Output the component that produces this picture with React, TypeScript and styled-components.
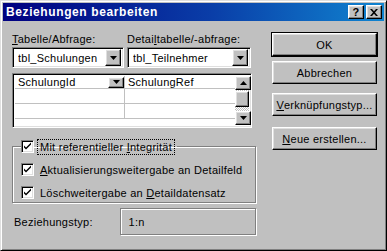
import React from "react";
import styled, { createGlobalStyle, css } from "styled-components";

const GlobalStyle = createGlobalStyle`
    html, body {
        margin: 0;
        padding: 0;
        background: #c0c0c0;
    }
    * {
        box-sizing: border-box;
    }
`;

const raised = css`
    border: 1px solid;
    border-color: #ffffff #000000 #000000 #ffffff;
    box-shadow: inset -1px -1px 0 #808080, inset 1px 1px 0 #dfdfdf;
    background: #c0c0c0;
`;

const sunken = css`
    border: 1px solid;
    border-color: #808080 #ffffff #ffffff #808080;
    box-shadow: inset 1px 1px 0 #000000, inset -1px -1px 0 #dfdfdf;
`;

const Window = styled.div`
    width: 387px;
    height: 251px;
    display: flex;
    flex-direction: column;
    padding: 2px;
    background: #c0c0c0;
    border: 1px solid;
    border-color: #dfdfdf #000000 #000000 #dfdfdf;
    box-shadow: inset 1px 1px 0 #ffffff, inset -1px -1px 0 #808080;
    font-family: "Liberation Sans", Arial, sans-serif;
    font-size: 11px;
    letter-spacing: 0.25px;
    color: #000000;
`;

const TitleBar = styled.div`
    height: 18px;
    display: flex;
    align-items: center;
    padding: 0 2px 0 3px;
    background: linear-gradient(90deg, #000080 0%, #0a3ea8 55%, #1084d0 100%);
    color: #ffffff;
`;

const TitleText = styled.div`
    flex: 1;
    font-weight: bold;
    font-size: 12px;
    letter-spacing: 0.6px;
`;

const TitleButton = styled.div<{ $gap?: number }>`
    ${raised};
    width: 16px;
    height: 14px;
    margin-left: ${(p) => p.$gap ?? 0}px;
    display: flex;
    align-items: center;
    justify-content: center;
    color: #000000;
    font-weight: bold;
    font-size: 11px;
    line-height: 1;
`;

const Content = styled.div`
    flex: 1;
    display: flex;
    padding: 12px 0 0 9px;
    gap: 16px;
`;

const LeftColumn = styled.div`
    width: 244px;
    display: flex;
    flex-direction: column;
`;

const TopGrid = styled.div`
    display: grid;
    grid-template-columns: 112px 124px;
    column-gap: 3px;
    row-gap: 1px;
`;

const Label = styled.div`
    height: 13px;
    line-height: 13px;
    white-space: nowrap;
`;

const Combo = styled.div`
    ${sunken};
    height: 21px;
    background: #ffffff;
    display: flex;
    align-items: center;
    padding: 2px 2px 2px 5px;
`;

const ComboText = styled.div`
    flex: 1;
    white-space: nowrap;
    overflow: hidden;
`;

const ArrowButton = styled.div<{ $h?: number }>`
    ${raised};
    width: 16px;
    height: ${(p) => p.$h ?? 17}px;
    display: flex;
    align-items: center;
    justify-content: center;
    flex-shrink: 0;
`;

const FieldTable = styled.div`
    ${sunken};
    margin-top: 5px;
    width: 240px;
    height: 55px;
    background: #ffffff;
    display: flex;
    padding: 2px;
`;

const Rows = styled.div`
    flex: 1;
    display: flex;
    flex-direction: column;
`;

const Row = styled.div<{ $h: number }>`
    height: ${(p) => p.$h}px;
    flex-shrink: 0;
    display: grid;
    grid-template-columns: 110px 1fr;
    border-bottom: 1px solid #c0c0c0;
`;

const Cell = styled.div<{ $first?: boolean }>`
    display: flex;
    align-items: center;
    padding-left: 3px;
    white-space: nowrap;
    border-right: ${(p) => (p.$first ? "1px solid #c0c0c0" : "none")};
`;

const CellText = styled.div`
    flex: 1;
`;

const ScrollBar = styled.div`
    width: 14px;
    display: flex;
    flex-direction: column;
    background-color: #e0e0e0;
    background-image: repeating-conic-gradient(#c0c0c0 0 25%, #ffffff 0 50%);
    background-size: 2px 2px;
`;

const ScrollThumb = styled.div`
    ${raised};
    height: 16px;
    margin-top: 1px;
`;

const Spacer = styled.div`
    flex: 1;
`;

const Group = styled.fieldset`
    margin: 10px 0 0 0;
    padding: 0 0 0 8px;
    min-width: 0;
    width: 244px;
    height: 65px;
    border: 1px solid #808080;
    box-shadow: 1px 1px 0 #ffffff, inset 1px 1px 0 #ffffff;
    display: flex;
    flex-direction: column;
`;

const Legend = styled.legend`
    padding: 0 2px 0 0;
    margin-left: 0;
    display: flex;
    align-items: center;
    height: 17px;
`;

const CheckRow = styled.div<{ $top?: number }>`
    display: flex;
    align-items: center;
    height: 13px;
    margin-top: ${(p) => p.$top ?? 0}px;
`;

const CheckBox = styled.div`
    ${sunken};
    width: 13px;
    height: 13px;
    background: #ffffff;
    display: flex;
    align-items: center;
    justify-content: center;
    flex-shrink: 0;
`;

const CheckLabel = styled.div<{ $focus?: boolean }>`
    margin-left: 3px;
    padding: 0 2px;
    line-height: 14px;
    white-space: nowrap;
    border: 1px ${(p) => (p.$focus ? "dotted #000000" : "solid transparent")};
`;

const TypeRow = styled.div`
    margin-top: 5px;
    display: flex;
    align-items: center;
    height: 27px;
`;

const TypeLabel = styled.div`
    width: 108px;
    padding-left: 2px;
`;

const TypeBox = styled.div`
    width: 137px;
    height: 27px;
    border: 1px solid #808080;
    box-shadow: 1px 1px 0 #ffffff, inset 1px 1px 0 #ffffff;
    display: flex;
    align-items: center;
    padding-left: 8px;
`;

const RightColumn = styled.div`
    width: 105px;
    display: flex;
    flex-direction: column;
`;

const DialogButton = styled.div<{ $default?: boolean; $top?: number }>`
    ${raised};
    height: 23px;
    margin-top: ${(p) => p.$top ?? 0}px;
    display: flex;
    align-items: center;
    justify-content: center;
    white-space: nowrap;
    ${(p) =>
        p.$default &&
        css`
            box-shadow: inset -1px -1px 0 #808080, inset 1px 1px 0 #dfdfdf, 0 0 0 1px #000000;
        `}
`;

const U = styled.span`
    text-decoration: underline;
`;

const DownArrow = () => (
    <svg width="7" height="4" viewBox="0 0 7 4">
        <path d="M0 0h7L3.5 4z" fill="#000000" />
    </svg>
);

const UpArrow = () => (
    <svg width="7" height="4" viewBox="0 0 7 4">
        <path d="M0 4h7L3.5 0z" fill="#000000" />
    </svg>
);

const Check = () => (
    <svg width="9" height="9" viewBox="0 0 9 9">
        <path d="M1 3.5l2 2 5-5v2l-5 5-2-2z" fill="#000000" />
    </svg>
);

const CloseGlyph = () => (
    <svg width="8" height="7" viewBox="0 0 8 7">
        <path d="M0 0h2l2 2.2L6 0h2L5 3.5 8 7H6L4 4.8 2 7H0l3-3.5z" fill="#000000" />
    </svg>
);

export default function App() {
    return (
        <>
            <GlobalStyle />
            <Window>
                <TitleBar>
                    <TitleText>Beziehungen bearbeiten</TitleText>
                    <TitleButton>?</TitleButton>
                    <TitleButton $gap={2}>
                        <CloseGlyph />
                    </TitleButton>
                </TitleBar>
                <Content>
                    <LeftColumn>
                        <TopGrid>
                            <Label>
                                <U>T</U>abelle/Abfrage:
                            </Label>
                            <Label>
                                Detai<U>l</U>tabelle/-abfrage:
                            </Label>
                            <Combo>
                                <ComboText>tbl_Schulungen</ComboText>
                                <ArrowButton>
                                    <DownArrow />
                                </ArrowButton>
                            </Combo>
                            <Combo>
                                <ComboText>tbl_Teilnehmer</ComboText>
                                <ArrowButton>
                                    <DownArrow />
                                </ArrowButton>
                            </Combo>
                        </TopGrid>

                        <FieldTable>
                            <Rows>
                                <Row $h={13}>
                                    <Cell $first>
                                        <CellText>SchulungId</CellText>
                                        <ArrowButton $h={11}>
                                            <DownArrow />
                                        </ArrowButton>
                                    </Cell>
                                    <Cell>SchulungRef</Cell>
                                </Row>
                                <Row $h={15}>
                                    <Cell $first />
                                    <Cell />
                                </Row>
                                <Row $h={15}>
                                    <Cell $first />
                                    <Cell />
                                </Row>
                            </Rows>
                            <ScrollBar>
                                <ArrowButton $h={14}>
                                    <UpArrow />
                                </ArrowButton>
                                <ScrollThumb />
                                <Spacer />
                                <ArrowButton $h={14}>
                                    <DownArrow />
                                </ArrowButton>
                            </ScrollBar>
                        </FieldTable>

                        <Group>
                            <Legend>
                                <CheckBox>
                                    <Check />
                                </CheckBox>
                                <CheckLabel $focus>
                                    Mit referentieller <U>I</U>ntegrität
                                </CheckLabel>
                            </Legend>
                            <CheckRow $top={8}>
                                <CheckBox>
                                    <Check />
                                </CheckBox>
                                <CheckLabel>
                                    <U>A</U>ktualisierungsweitergabe an Detailfeld
                                </CheckLabel>
                            </CheckRow>
                            <CheckRow $top={10}>
                                <CheckBox>
                                    <Check />
                                </CheckBox>
                                <CheckLabel>
                                    Löschweitergabe an <U>D</U>etaildatensatz
                                </CheckLabel>
                            </CheckRow>
                        </Group>

                        <TypeRow>
                            <TypeLabel>Beziehungstyp:</TypeLabel>
                            <TypeBox>1:n</TypeBox>
                        </TypeRow>
                    </LeftColumn>

                    <RightColumn>
                        <DialogButton $default>OK</DialogButton>
                        <DialogButton $top={5}>Abbrechen</DialogButton>
                        <DialogButton $top={9}>
                            <U>V</U>erknüpfungstyp...
                        </DialogButton>
                        <DialogButton $top={11}>
                            <U>N</U>eue erstellen...
                        </DialogButton>
                    </RightColumn>
                </Content>
            </Window>
        </>
    );
}
